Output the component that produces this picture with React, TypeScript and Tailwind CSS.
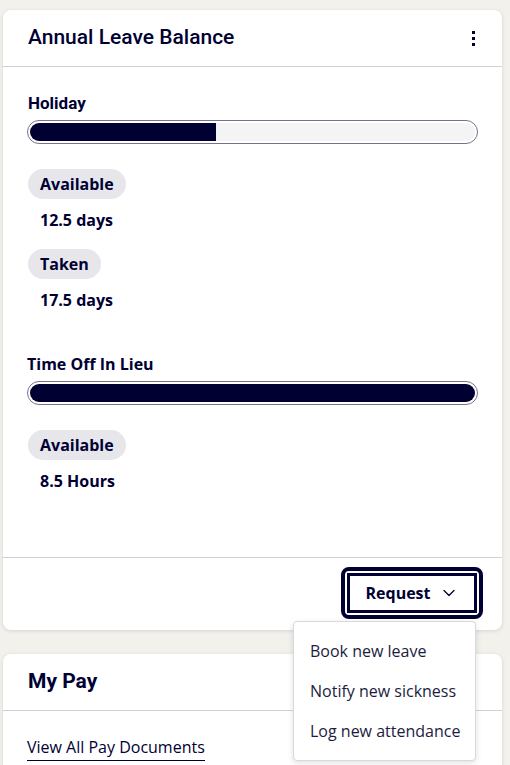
import React from "react";
import { ChevronDown } from "lucide-react";

const body = "font-['Open_Sans','Noto_Sans',sans-serif]";
const head = "font-['Roboto','Liberation_Sans',sans-serif]";

type Stat = { label: string; value: string };

const ProgressBar: React.FC<{ pct: number }> = ({ pct }) => (
  <div className="h-6 w-full rounded-full border border-[#75728a] bg-white p-[2px]">
    <div className="h-full w-full overflow-hidden rounded-full bg-[#f4f4f4]">
      <div className="h-full bg-[#000033]" style={{ width: `${pct}%` }} />
    </div>
  </div>
);

const StatBlock: React.FC<{ stat: Stat }> = ({ stat }) => (
  <div>
    <span className="inline-flex h-[30px] items-center rounded-full bg-[#e6e6eb] px-3 text-base font-bold text-[#000033]">
      {stat.label}
    </span>
    <p className="mt-[9px] pl-3 text-base leading-6 font-bold text-[#000033]">{stat.value}</p>
  </div>
);

const App: React.FC = () => {
  const holiday: Stat[] = [
    { label: "Available", value: "12.5 days" },
    { label: "Taken", value: "17.5 days" },
  ];

  return (
    <div className={`min-h-[765px] w-[510px] overflow-hidden bg-[#f2f1ec] pt-[10px] pr-[8px] pl-[3px] ${body}`}>
      {/* Annual leave card */}
      <div className="relative rounded-lg bg-white shadow-[0_1px_4px_rgba(0,0,0,0.12)]">
        <div className="flex h-14 items-center justify-between pr-[27px] pl-[25px]">
          <h2 className={`text-[21px] font-medium text-[#000033] ${head}`}>Annual Leave Balance</h2>
          <div className="flex flex-col gap-[3px]">
            <span className="block h-[3px] w-[3px] bg-[#000033]" />
            <span className="block h-[3px] w-[3px] bg-[#000033]" />
            <span className="block h-[3px] w-[3px] bg-[#000033]" />
          </div>
        </div>
        <div className="h-px bg-[#d2d1da]" />

        <div className="pt-6 pr-6 pb-16 pl-[24px]">
          <h3 className={`pl-[1px] text-[17px] leading-6 font-bold text-[#000033] ${head}`}>Holiday</h3>
          <div className="mt-[5px]">
            <ProgressBar pct={41.7} />
          </div>
          <div className="mt-[25px] flex flex-col gap-[17px] pl-[1px]">
            {holiday.map((s) => (
              <StatBlock key={s.label} stat={s} />
            ))}
          </div>

          <h3 className="mt-10 text-base leading-6 font-bold text-[#000033]">Time Off In Lieu</h3>
          <div className="mt-[5px]">
            <ProgressBar pct={100} />
          </div>
          <div className="mt-[25px] pl-[1px]">
            <StatBlock stat={{ label: "Available", value: "8.5 Hours" }} />
          </div>
        </div>

        <div className="h-px bg-[#d2d1da]" />
        <div className="flex justify-end pt-[9px] pr-[19px] pb-[11px]">
          <div className="rounded-lg border-4 border-[#000033] bg-white p-[2px]">
            <button className="flex h-[40px] w-[130px] items-center justify-center gap-2 border-[3px] border-[#000033] bg-white text-base font-bold text-[#000033]">
              Request
              <ChevronDown className="h-5 w-5" strokeWidth={1.5} />
            </button>
          </div>
        </div>

        {/* Dropdown menu */}
        <div className="absolute top-[611px] left-[290px] z-10 w-[183px] rounded border border-[#d8d8e0] bg-white py-[9px] shadow-[0_2px_6px_rgba(0,0,0,0.12)]">
          {["Book new leave", "Notify new sickness", "Log new attendance"].map((item) => (
            <div key={item} className="flex h-10 items-center px-4 text-base whitespace-nowrap text-[#1c1c40]">
              {item}
            </div>
          ))}
        </div>
      </div>

      {/* My Pay card */}
      <div className="mt-6 rounded-lg bg-white shadow-[0_1px_4px_rgba(0,0,0,0.12)]">
        <div className="flex h-14 items-center pl-[25px]">
          <h2 className={`text-[21px] font-bold text-[#000033] ${head}`}>My Pay</h2>
        </div>
        <div className="h-px bg-[#d2d1da]" />
        <div className="pt-6 pb-6 pl-6">
          <a className="border-b border-[#000033] pb-[2px] text-base text-[#000033]">View All Pay Documents</a>
        </div>
      </div>
    </div>
  );
};

export default App;
